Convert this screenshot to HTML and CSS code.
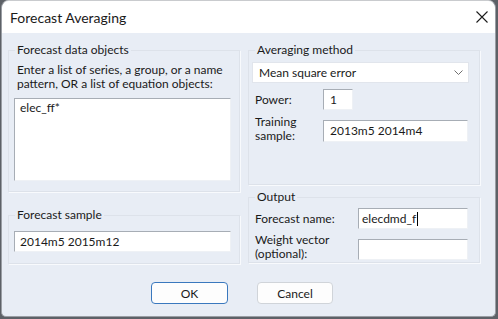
FILE: index.html
```html
<!DOCTYPE html>
<html lang="en">
<head>
    <meta charset="UTF-8">
    <title>Forecast Averaging</title>
    <link rel="stylesheet" href="styles.css">
</head>
<body>
    <div class="window">
        <div class="titlebar">
            <span class="title">Forecast Averaging</span>
            <svg class="close" width="12" height="12" viewBox="0 0 12 12">
                <path d="M0.5 0.5L11.5 11.5M11.5 0.5L0.5 11.5" stroke="#1c1c1c" stroke-width="1.1" fill="none"/>
            </svg>
        </div>
        <div class="dialog">
            <div class="columns">
                <div class="col">
                    <fieldset class="group group-objects">
                        <legend>Forecast data objects</legend>
                        <p class="hint">Enter a list of series, a group, or a name<br>pattern, OR a list of equation objects:</p>
                        <div class="edit edit-area">elec_ff*</div>
                    </fieldset>
                    <fieldset class="group group-sample">
                        <legend>Forecast sample</legend>
                        <div class="edit edit-sample">2014m5 2015m12</div>
                    </fieldset>
                </div>
                <div class="col">
                    <fieldset class="group group-method">
                        <legend>Averaging method</legend>
                        <div class="combo">
                            <span>Mean square error</span>
                            <svg class="chevron" width="9" height="5" viewBox="0 0 9 5">
                                <polyline points="0.5,0.5 4.5,4.5 8.5,0.5" stroke="#6f6f6f" fill="none"/>
                            </svg>
                        </div>
                        <div class="row row-power">
                            <span class="label">Power:</span>
                            <div class="edit edit-power">1</div>
                        </div>
                        <div class="row row-training">
                            <span class="label label-two">Training<br>sample:</span>
                            <div class="edit edit-training">2013m5 2014m4</div>
                        </div>
                    </fieldset>
                    <fieldset class="group group-output">
                        <legend>Output</legend>
                        <div class="row row-name">
                            <span class="label label-out">Forecast name:</span>
                            <div class="edit edit-out">elecdmd_f<span class="caret"></span></div>
                        </div>
                        <div class="row row-weight">
                            <span class="label label-out label-two">Weight vector<br>(optional):</span>
                            <div class="edit edit-out"></div>
                        </div>
                    </fieldset>
                </div>
            </div>
            <div class="buttons">
                <button class="btn btn-default">OK</button>
                <button class="btn btn-cancel">Cancel</button>
            </div>
        </div>
    </div>
</body>
</html>
```

FILE: styles.css
```css
body {
    margin: 0;
    background-color: #5d6167;
    font-family: 'Segoe UI', Lato, 'Noto Sans', sans-serif;
    font-size: 12px;
    color: #1a1a1a;
}
.window {
    box-sizing: border-box;
    width: 495px;
    height: 317px;
    margin-left: 1px;
    background-color: #e8edf5;
    border: 1px solid #9a9ea4;
    border-top-color: #c9cbce;
    border-radius: 8px 8px 5px 5px;
    overflow: hidden;
}
.titlebar {
    display: flex;
    align-items: center;
    justify-content: space-between;
    height: 32px;
    padding: 0 6px 0 8px;
    background-color: #fff;
}
.title {
    font-size: 14px;
    color: #1a1a1a;
}
.close {
    margin-right: 1px;
}
.dialog {
    padding: 9px 14px 0 6px;
}
.columns {
    display: flex;
    gap: 8px;
}
.col {
    display: flex;
    flex-direction: column;
    width: 232px;
}
.group {
    box-sizing: border-box;
    margin: 0;
    padding: 0;
    min-width: 0;
    border: 1px solid #dde2ea;
    box-shadow: 1px 1px 0 #f8fafd;
}
.group legend {
    margin-left: 6px;
    padding: 0 2px;
    line-height: 16px;
}
.group-objects { height: 150px; }
.group-sample { height: 57px; margin-top: 15px; }
.group-method { height: 143px; }
.group-output { height: 74px; margin-top: 4px; }

.hint {
    margin: 5px 0 0 8px;
    line-height: 14px;
}
.edit {
    box-sizing: border-box;
    background-color: #fff;
    border: 1px solid;
    border-color: #a7adb5 #eef1f5 #eef1f5 #a7adb5;
    height: 21px;
    line-height: 19px;
    white-space: nowrap;
}
.edit-area {
    width: 217px;
    height: 83px;
    margin: 7px 0 0 5px;
    padding: 2px 5px;
    line-height: 14px;
}
.edit-sample {
    width: 217px;
    margin: 8px 0 0 5px;
    padding-left: 5px;
}
.combo {
    box-sizing: border-box;
    display: flex;
    align-items: center;
    justify-content: space-between;
    width: 217px;
    height: 21px;
    margin: 4px 0 0 3px;
    padding: 0 5px 0 6px;
    background-color: #fff;
    border: 1px solid #e1e5ec;
}
.row {
    display: flex;
    align-items: center;
    margin-left: 6px;
}
.label {
    flex-shrink: 0;
    width: 68px;
}
.label-two {
    align-self: flex-start;
    margin-top: -4px;
    line-height: 14px;
}
.label-out {
    width: 103px;
}
.row-power { margin-top: 6px; }
.row-training { margin-top: 9px; }
.row-name { margin-top: 3px; }
.row-weight { margin-top: 8px; }
.edit-power {
    width: 30px;
    padding-left: 6px;
}
.edit-training {
    width: 145px;
    height: 22px;
    line-height: 20px;
    padding-left: 6px;
}
.edit-out {
    width: 110px;
    padding-left: 3px;
}
.caret {
    display: inline-block;
    width: 1px;
    height: 14px;
    margin-left: 1px;
    vertical-align: -3px;
    background-color: #000;
}
.buttons {
    display: flex;
    justify-content: center;
    gap: 29px;
    margin-top: 18px;
    padding-right: 5px;
}
.btn {
    box-sizing: border-box;
    height: 22px;
    padding: 0;
    font-family: inherit;
    font-size: 12px;
    color: #1a1a1a;
    background-color: #fdfdfd;
    border: 1px solid #d0d4d9;
    border-radius: 4px;
}
.btn-default {
    width: 77px;
    border-color: #3a78be;
}
.btn-cancel {
    width: 76px;
}
```
